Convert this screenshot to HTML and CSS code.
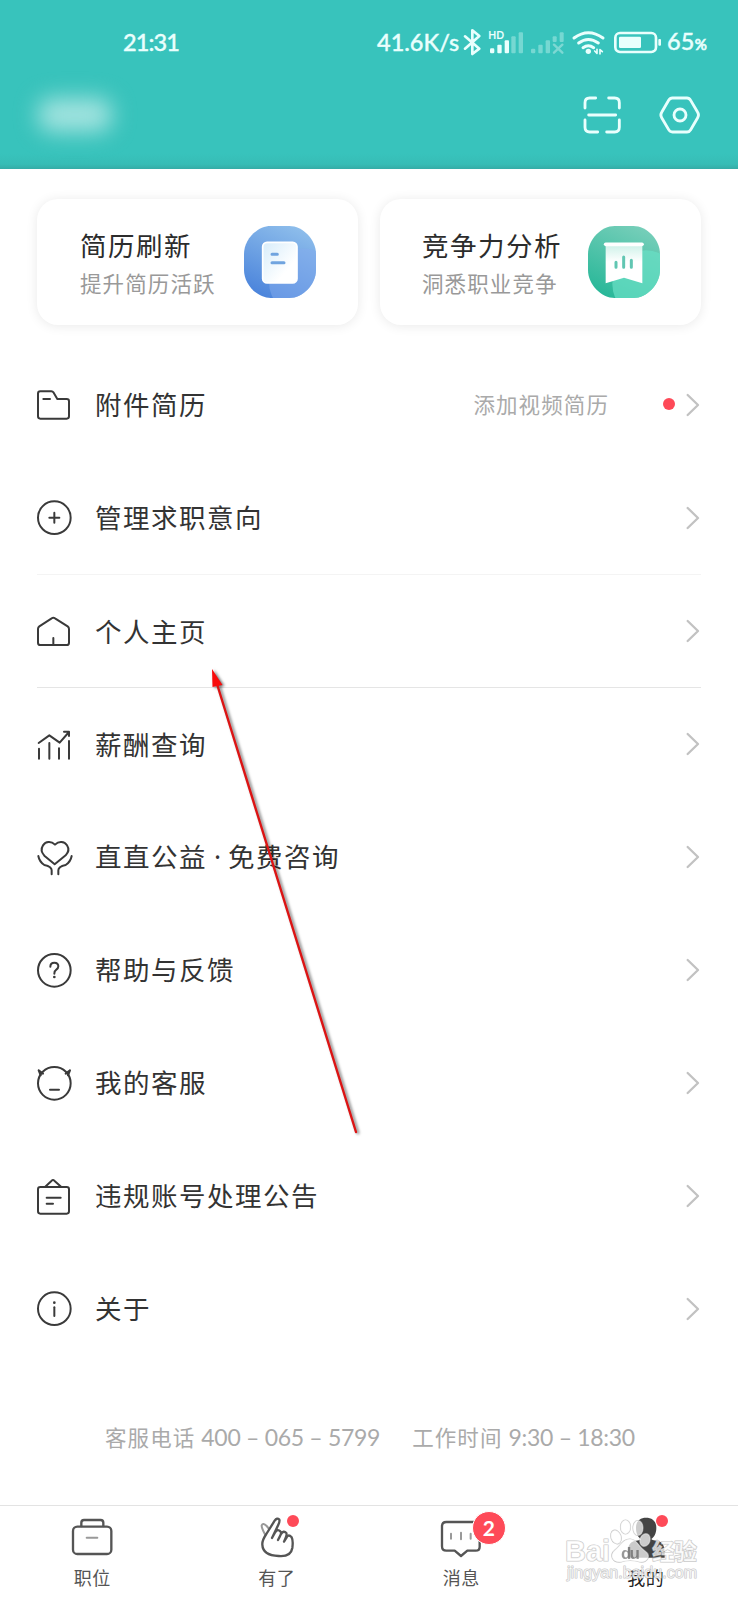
FILE: index.html
```html
<!DOCTYPE html>
<html lang="zh-CN">
<head>
<meta charset="utf-8">
<title>我的</title>
<link rel="stylesheet" href="styles.css">
</head>
<body>
<div class="screen">
  <header class="header">
    <div class="status">
      <span class="clock">21:31</span>
      <span class="speed">41.6K/s</span>
      <svg class="status-icons" width="205" height="40" viewBox="276 60 615 120">
        <path class="bt" d="M291 109L334 146L313 162V91L334 108L291 146"/>
        <text class="hd" x="361" y="118">HD</text>
        <g class="bars">
          <rect x="366" y="145" width="13" height="15" rx="4"/><rect x="388" y="134" width="13" height="26" rx="3"/><rect x="410" y="121" width="13" height="39" rx="3"/>
        </g>
        <g class="bars faint">
          <rect x="430" y="109" width="13" height="51" rx="3"/><rect x="452" y="97" width="13" height="63" rx="3"/>
          <rect x="489" y="146" width="13" height="14" rx="4"/><rect x="511" y="134" width="13" height="26" rx="3"/><rect x="533" y="121" width="13" height="39" rx="3"/>
          <rect x="554" y="109" width="12" height="17" rx="3"/><rect x="575" y="97" width="12" height="29" rx="3"/>
          <path class="cross" d="M558 134L583 158M583 134L558 158"/>
        </g>
        <path class="wifi" d="M618 114Q661 82 705 114M632 129Q661 108 691 129M645 143Q661 132 677 143"/>
        <circle class="solid" cx="661" cy="154" r="8"/>
        <path class="updown" d="M680 153L687 160V148M703 155L696 149V162"/>
        <rect class="battery" x="742" y="99" width="122" height="57" rx="14"/>
        <rect class="solid" x="753" y="110" width="66" height="34" rx="4"/>
        <rect class="solid" x="871" y="117" width="8" height="20" rx="3"/>
      </svg>
      <span class="percent">65<small>%</small></span>
    </div>
    <div class="toolbar">
      <div class="name-blur"></div>
      <svg class="tool" width="38" height="38" viewBox="643 289 114 114"><path d="M649 325V309Q649 295 663 295H681M720 295H738Q752 295 752 309V325M649 361V383Q649 397 663 397H687M714 397H738Q752 397 752 383V361M660 346H741"/></svg>
      <svg class="tool" width="42" height="38" viewBox="872 289 126 114"><path d="M912 295H956Q963 295 967 302L988 338Q993 346 988 354L967 390Q963 397 956 397H912Q905 397 901 390L880 354Q875 346 880 338L901 302Q905 295 912 295Z"/><circle cx="935" cy="346" r="18"/></svg>
    </div>
  </header>

  <section class="cards">
    <div class="card">
      <div class="card-text"><h2>简历刷新</h2><p>提升简历活跃</p></div>
      <svg class="card-icon" width="72" height="72" viewBox="0 0 216 216">
        <defs>
          <linearGradient id="blue" x1=".7" y1="0" x2=".25" y2="1"><stop offset="0" stop-color="#8dbdeb"/><stop offset="1" stop-color="#4a83db"/></linearGradient>
          <linearGradient id="sheet" x1="0" y1="0" x2="1" y2="1"><stop offset=".1" stop-color="#dceffb"/><stop offset=".7" stop-color="#fff"/></linearGradient>
          <clipPath id="squircle"><path d="M80 0H136C176 0 216 40 216 84V132C216 176 176 216 136 216H80C40 216 0 176 0 132V84C0 40 40 0 80 0Z"/></clipPath>
        </defs>
        <g clip-path="url(#squircle)"><rect width="216" height="216" fill="url(#blue)"/><circle cx="176" cy="168" r="101" fill="#83abee" opacity=".5"/></g>
        <rect x="56" y="49" width="103" height="122" rx="13" fill="url(#sheet)" stroke="#fff" stroke-width="5"/>
        <path d="M84 85H100M84 110H120" stroke="#70a4df" stroke-width="9" stroke-linecap="round"/>
      </svg>
    </div>
    <div class="card right-card">
      <div class="card-text"><h2>竞争力分析</h2><p>洞悉职业竞争</p></div>
      <svg class="card-icon" width="72" height="72" viewBox="0 0 216 216">
        <defs>
          <linearGradient id="green" x1=".7" y1="0" x2=".25" y2="1"><stop offset="0" stop-color="#76ceb9"/><stop offset="1" stop-color="#27b798"/></linearGradient>
          <linearGradient id="flag" x1="0" y1="0" x2="0" y2="1"><stop offset="0" stop-color="#ccf1e8"/><stop offset=".45" stop-color="#fff"/></linearGradient>
        </defs>
        <g clip-path="url(#squircle)"><rect width="216" height="216" fill="url(#green)"/><circle cx="174" cy="174" r="101" fill="#68dfc5" opacity=".72"/></g>
        <path d="M53 55H163V172L108 155L53 172Z" fill="url(#flag)"/>
        <path d="M53 55H162" stroke="#fff" stroke-width="11" stroke-linecap="round"/>
        <path d="M84 109V124M107 93V124M130 103V124" stroke="#61c6b2" stroke-width="9" stroke-linecap="round"/>
      </svg>
    </div>
  </section>

  <nav class="menu">
    <a class="row">
      <svg class="icon" viewBox="0 0 108 108"><path d="M6 20Q6 13 13 13H46Q50 13 53 17L64 36H92Q99 36 99 43V88Q99 95 92 95H13Q6 95 6 88ZM22 36H42"/></svg>
      <span class="label">附件简历</span><span class="hint">添加视频简历</span><i class="dot"></i>
      <svg class="chevron" viewBox="0 0 42 72"><path d="M5 6L36 36L5 66"/></svg>
    </a>
    <a class="row">
      <svg class="icon" viewBox="0 0 108 108"><circle cx="55" cy="53" r="49"/><path d="M55 38V68M40 53H70"/></svg>
      <span class="label">管理求职意向</span>
      <svg class="chevron" viewBox="0 0 42 72"><path d="M5 6L36 36L5 66"/></svg>
    </a>
    <a class="row ruled">
      <svg class="icon" viewBox="0 0 108 108"><path d="M6 48Q6 43 10 40L47 16Q52 12 57 16L95 40Q99 43 99 48V89Q99 96 92 96H13Q6 96 6 89ZM52 75V96"/></svg>
      <span class="label">个人主页</span>
      <svg class="chevron" viewBox="0 0 42 72"><path d="M5 6L36 36L5 66"/></svg>
    </a>
    <a class="row ruled strong">
      <svg class="icon" viewBox="0 0 108 108"><path d="M8 51L40 28L71 50L99 18M84 17H99V30M9 68V98M40 51V98M69 67V98M99 45V98"/></svg>
      <span class="label">薪酬查询</span>
      <svg class="chevron" viewBox="0 0 42 72"><path d="M5 6L36 36L5 66"/></svg>
    </a>
    <a class="row">
      <svg class="icon" viewBox="0 0 108 108"><path d="M57 17C45 5 29 7 21 19C14 30 17 41 25 50L56 76L89 49C97 41 100 30 93 19C85 7 69 5 57 17ZM7 51Q10 68 25 78Q47 83 47 94V106M107 51Q104 68 89 78Q67 83 67 94V106"/></svg>
      <span class="label">直直公益<b> · </b>免费咨询</span>
      <svg class="chevron" viewBox="0 0 42 72"><path d="M5 6L36 36L5 66"/></svg>
    </a>
    <a class="row">
      <svg class="icon" viewBox="0 0 108 108"><circle cx="55" cy="55" r="49"/><path d="M43 44Q43 32 55 32Q67 32 67 43Q67 49 61 53Q55 57 55 65"/><circle class="point" cx="55" cy="75" r="4"/></svg>
      <span class="label">帮助与反馈</span>
      <svg class="chevron" viewBox="0 0 42 72"><path d="M5 6L36 36L5 66"/></svg>
    </a>
    <a class="row">
      <svg class="icon" viewBox="0 0 108 108"><circle cx="55" cy="55" r="49"/><path d="M8 16L21 26M8 16L14 31M102 16L89 26M102 16L96 31M42 74H69"/></svg>
      <span class="label">我的客服</span>
      <svg class="chevron" viewBox="0 0 42 72"><path d="M5 6L36 36L5 66"/></svg>
    </a>
    <a class="row">
      <svg class="icon" viewBox="0 0 108 108"><rect x="6" y="27" width="93" height="80" rx="7"/><path d="M27 27L47 8Q51 4 55 8L76 27M32 59H74M32 77H51"/></svg>
      <span class="label">违规账号处理公告</span>
      <svg class="chevron" viewBox="0 0 42 72"><path d="M5 6L36 36L5 66"/></svg>
    </a>
    <a class="row">
      <svg class="icon" viewBox="0 0 108 108"><circle cx="55" cy="53" r="49"/><path d="M55 49V75"/><circle class="point" cx="55" cy="35" r="4"/></svg>
      <span class="label">关于</span>
      <svg class="chevron" viewBox="0 0 42 72"><path d="M5 6L36 36L5 66"/></svg>
    </a>
  </nav>

  <p class="contact"><span>客服电话 <b>400 – 065 – 5799</b></span><span>工作时间 <b>9:30 – 18:30</b></span></p>

  <footer class="tabs">
    <a class="tab">
      <svg class="tab-icon" width="48" height="42" viewBox="84 78 144 126"><rect x="99" y="110" width="115" height="82" rx="13"/><path d="M124 108V98Q124 90 132 90H182Q190 90 190 98V108"/><path class="soft" d="M140 143H172"/></svg>
      <span>职位</span>
    </a>
    <a class="tab">
      <svg class="tab-icon" width="48" height="42" viewBox="638 78 144 126"><path class="soft" d="M674 133Q663 113 664 106Q668 97 679 108L684 114"/><path d="M666 164Q665 151 678 132L703 92Q710 82 717 89Q719 93 714 104L695 144L705 126Q712 116 720 124Q726 129 713 150L722 132Q730 120 738 129Q741 134 731 155L739 142Q744 131 754 142Q759 151 756 174C753 193 739 200 715 198C687 197 667 187 666 164Z"/></svg>
      <span>有了</span><i class="tab-dot"></i>
    </a>
    <a class="tab">
      <svg class="tab-icon" width="48" height="42" viewBox="112 78 144 126"><path d="M140 96H228Q240 96 240 108V170Q240 182 228 182H203L184 198L165 182H140Q127 182 127 169V109Q127 96 140 96Z"/><path class="soft" d="M154 131V146M184 128V148M213 131V146"/></svg>
      <span>消息</span><i class="badge">2</i>
    </a>
    <a class="tab active">
      <svg class="tab-icon" width="48" height="42" viewBox="665 78 144 126"><path class="person" d="M737 83C754 83 768 92 768 113C768 131 761 141 753 147Q754 150 760 151C786 153 793 164 793 190V203H682V190C682 164 690 153 716 151Q722 150 722 147C713 141 707 131 707 113C707 92 721 83 737 83Z"/></svg>
      <span>我的</span><i class="tab-dot"></i>
    </a>
  </footer>

  <svg class="pointer" width="160" height="480" viewBox="205 662 160 480">
    <path class="shaft" d="M217 684L356 1132"/>
    <path class="tip" d="M212 669L222.500 685L212.500 687Z"/>
  </svg>
  <svg class="watermark" width="150" height="72" viewBox="560 1518 150 72">
    <text class="brand" x="565" y="1561" textLength="45">Bai</text>
    <g class="paw"><ellipse cx="616" cy="1537" rx="5" ry="7" transform="rotate(-20 616 1537)"/><ellipse cx="625.500" cy="1527" rx="5" ry="7"/><ellipse cx="638" cy="1528" rx="5" ry="7.500"/><ellipse cx="645" cy="1540" rx="5" ry="6.500" transform="rotate(20 645 1540)"/><path d="M630 1539C637 1539 639 1547 645 1551C652 1556 647 1563 640 1562Q630 1559 621 1562C612 1563 609 1555 615 1550C621 1545 623 1539 630 1539Z"/></g>
    <text class="du" x="621" y="1559" textLength="19">du</text>
    <text class="brand cjk" x="652" y="1560" textLength="45">经验</text>
    <text class="site" x="567" y="1578" textLength="130">jingyan.baidu.com</text>
  </svg>
</div>
</body>
</html>
```
FILE: styles.css
```css
* { box-sizing: border-box; }
body { margin: 0; background: #fff; font-family: "Noto Sans CJK SC", sans-serif; color: #333; }
.screen { position: relative; width: 738px; height: 1600px; overflow: hidden; display: flex; flex-direction: column; background: #fff; }
svg { flex: none; display: block; fill: none; overflow: visible; stroke-linecap: round; stroke-linejoin: round; }
h2, p { margin: 0; font-weight: 400; }

.header { height: 169px; flex: none; background: linear-gradient(#38c3bc 0, #38c3bc 153px, #37bdb6 164px, #35aca6 169px); color: #e9fffd; }
.status { height: 85px; display: flex; align-items: center; padding: 0 0 1px 123px; font-family: Lato, sans-serif; font-size: 23.5px; line-height: 30px; font-weight: 500; -webkit-text-stroke: .35px #e9fffd; }
.clock { width: 254px; letter-spacing: -.9px; }
.speed { width: 83px; white-space: nowrap; letter-spacing: 0; }
.status-icons { margin-top: -4px; -webkit-text-stroke: 0; }
.bt, .updown, .wifi, .battery { stroke: #e9fffd; }
.bt { stroke-width: 8; }
.wifi { stroke-width: 9; }
.updown { stroke-width: 5; }
.battery { stroke-width: 8; }
.solid, .bars { fill: #e9fffd; }
.faint { opacity: .35; }
.cross { stroke: #fff; stroke-width: 7; }
.hd { fill: #e9fffd; font: bold 31px Lato, sans-serif; }
.percent { margin-left: 2px; letter-spacing: .2px; }
.percent small { font-size: 15px; -webkit-text-stroke-width: .7px; }
.toolbar { height: 60px; display: flex; align-items: center; padding: 0 37px 0 38px; gap: 38.500px; }
.name-blur { width: 74px; height: 34px; margin-right: auto; border-radius: 14px; background: #a2e3df; filter: blur(11px); }
.tool { stroke: #e9fffd; stroke-width: 8.5; }

.cards { height: 179px; flex: none; display: flex; gap: 22px; padding: 30px 37px 23px; }
.card { width: 321px; flex: none; display: flex; align-items: flex-start; border-radius: 21px; background: #fff; box-shadow: 0 1px 12px rgba(0, 0, 0, .09); padding-left: 43px; }
.right-card { padding-left: 42px; }
.card-text { width: 164px; padding-top: 27px; white-space: nowrap; }
.right-card .card-text { width: 166px; }
.card h2 { font-size: 26.500px; line-height: 38px; letter-spacing: 1.500px; color: #2c2c2c; }
.card p { font-size: 21.500px; line-height: 38px; letter-spacing: 1.100px; color: #999; }
.card-icon { margin-top: 27px; }

.menu { flex: none; padding: 0 37px; }
.row { height: 113px; display: flex; align-items: center; }
.ruled { border-top: 1px solid #f4f4f4; }
.strong { border-color: #e5e5e5; }
.icon { width: 36px; height: 36px; margin-left: -1px; stroke: #3a3a3a; stroke-width: 6; }
.icon .point { fill: #3a3a3a; stroke: none; }
.label { margin-left: 23px; margin-right: auto; padding-bottom: 2px; font-size: 26.500px; letter-spacing: 1.500px; line-height: 38px; white-space: nowrap; }
.ruled .label { padding-bottom: 0; }
.label b { font-family: "Noto Sans", sans-serif; font-weight: 400; letter-spacing: 0; line-height: 0; }
.hint { padding-bottom: 2px; font-size: 21.500px; letter-spacing: 1.100px; color: #aaa; margin-right: 54px; }
.dot { width: 12px; height: 12px; border-radius: 50%; background: #fe4a58; margin-right: 11px; margin-top: -2px; }
.chevron { width: 14px; height: 24px; margin-right: 1px; stroke: #c2c2c2; stroke-width: 7; }

.contact { height: 140px; flex: none; display: flex; padding: 53px 0 0 105px; gap: 32px; font-size: 21.500px; line-height: 38px; letter-spacing: 1.100px; color: #aaa; white-space: nowrap; }
.contact b { font-family: Lato, "Noto Sans CJK SC", sans-serif; font-weight: 400; font-size: 23px; letter-spacing: -.3px; }

.tabs { height: 95px; flex: none; display: flex; border-top: 1px solid #e3e3e3; }
.tab { position: relative; width: 184.500px; display: flex; flex-direction: column; align-items: center; padding-top: 10px; font-size: 18px; line-height: 26px; letter-spacing: .4px; color: #555; }
.tab span { margin-top: 6px; }
.tab-icon { stroke: #555; stroke-width: 7; }
.soft { stroke: #999; stroke-width: 6; }
.person { fill: #444; stroke: none; }
.active { color: #222; }
.tab-dot { position: absolute; left: 102px; top: 9px; width: 12px; height: 12px; border-radius: 50%; background: #fe4a58; }
.badge { position: absolute; left: 103px; top: 5px; width: 34px; height: 34px; border: 1px solid #fff; border-radius: 50%; background: #fe4a58; color: #fff; font: 700 21px/32px Lato, sans-serif; text-align: center; }

.pointer { position: absolute; left: 205px; top: 662px; filter: drop-shadow(2px 1px 1.500px rgba(0, 0, 0, .55)); }
.shaft { stroke: #dc1414; stroke-width: 2.4; }
.tip { fill: #f80c0c; stroke: none; }
.watermark { position: absolute; left: 560px; top: 1518px; }
.watermark text, .paw { fill: rgba(255, 255, 255, .72); stroke: rgba(180, 180, 180, .75); stroke-width: 1.2; paint-order: stroke; }
.watermark .brand { font: 700 29px "Liberation Sans", sans-serif; }
.watermark .cjk { font: 700 23px "Noto Sans CJK SC", sans-serif; }
.watermark .du { font: 700 17px "Liberation Sans", sans-serif; fill: #444; stroke: none; opacity: .55; }
.site { font: 400 16px "Liberation Sans", sans-serif; }
```
